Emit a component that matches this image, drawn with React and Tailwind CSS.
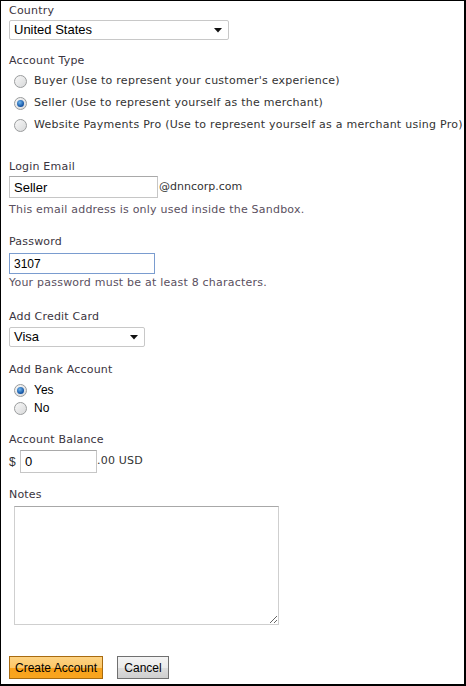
import React, { useState } from 'react';

const labelFont = { fontFamily: '"DejaVu Sans", Verdana, sans-serif' };
const inputFont = { fontFamily: '"Liberation Sans", Arial, sans-serif' };

function Radio({ checked, onClick }) {
  return (
    <span
      onClick={onClick}
      className="relative inline-flex items-center justify-center w-[13px] h-[13px] rounded-full border border-[#9a9c9d] bg-gradient-to-br from-[#f8f8f8] to-[#d8d9da] shrink-0"
    >
      {checked && (
        <span className="w-[7px] h-[7px] rounded-full bg-[radial-gradient(circle_at_40%_35%,#6fb6ee,#0f4fa0_70%)]" />
      )}
    </span>
  );
}

function Select({ value, width }) {
  return (
    <div
      className={`flex items-center justify-between h-[20px] ${width} border border-[#c8c8c8] rounded-[2px] bg-white pl-[4px] pr-[6px] text-[13px] text-black`}
      style={inputFont}
    >
      <span className="leading-[18px]">{value}</span>
      <svg width="8" height="5" viewBox="0 0 8 5"><path d="M0 0h8L4 4.5z" fill="#111" /></svg>
    </div>
  );
}

export default function App() {
  const [type, setType] = useState('seller');
  const [bank, setBank] = useState('yes');

  const label = 'block text-[11px] leading-[13px] text-[#3a3440] tracking-[0.2px]';
  const help = 'block text-[11px] leading-[13px] text-[#5a5060] tracking-[0.22px]';

  return (
    <div className="w-[466px] h-[686px] bg-white border-t border-l border-black border-r-2 border-b-2 pl-[8px] overflow-hidden" style={labelFont}>
      <span className={`${label} mt-[3px]`}>Country</span>
      <div className="mt-[3px]"><Select value="United States" width="w-[220px]" /></div>

      <span className={`${label} mt-[14px]`}>Account Type</span>
      <div className="mt-[3px] pl-[5px]">
        {[
          ['buyer', "Buyer (Use to represent your customer's experience)"],
          ['seller', 'Seller (Use to represent yourself as the merchant)'],
          ['pro', 'Website Payments Pro (Use to represent yourself as a merchant using Pro)'],
        ].map(([k, t]) => (
          <div key={k} className="flex items-center h-[22px] gap-[7px] cursor-default" onClick={() => setType(k)}>
            <Radio checked={type === k} />
            <span className="text-[11px] text-[#333] whitespace-nowrap tracking-[0.26px]">{t}</span>
          </div>
        ))}
      </div>

      <span className={`${label} mt-[24px]`}>Login Email</span>
      <div className="flex items-center mt-[3px]">
        <input
          defaultValue="Seller"
          className="w-[149px] h-[22px] border border-[#c6c6c6] border-t-[#a9a9a9] px-[4px] text-[13px] text-black outline-none"
          style={inputFont}
        />
        <span className="text-[11px] text-[#333] ml-[1px]">@dnncorp.com</span>
      </div>
      <span className={`${help} mt-[5px]`}>This email address is only used inside the Sandbox.</span>

      <span className={`${label} mt-[19px]`}>Password</span>
      <input
        defaultValue="3107"
        className="block mt-[5px] w-[146px] h-[21px] border border-[#7a9ccf] px-[4px] text-[12px] text-black outline-none"
        style={inputFont}
      />
      <span className={`${help} mt-[2px]`}>Your password must be at least 8 characters.</span>

      <span className={`${label} mt-[21px]`}>Add Credit Card</span>
      <div className="mt-[4px]"><Select value="Visa" width="w-[136px]" /></div>

      <span className={`${label} mt-[16px]`}>Add Bank Account</span>
      <div className="mt-[5px] pl-[5px]">
        {[['yes', 'Yes'], ['no', 'No']].map(([k, t]) => (
          <div key={k} className="flex items-center h-[18px] gap-[7px] cursor-default" onClick={() => setBank(k)}>
            <Radio checked={bank === k} />
            <span className="text-[12px] text-black" style={inputFont}>{t}</span>
          </div>
        ))}
      </div>

      <span className={`${label} mt-[16px]`}>Account Balance</span>
      <div className="flex items-center mt-[4px] text-[12px] text-[#333]" style={inputFont}>
        <span className="w-[11px]">$</span>
        <input
          defaultValue="0"
          className="w-[77px] h-[23px] border border-[#c6c6c6] border-t-[#a9a9a9] px-[4px] text-[13px] text-black outline-none"
          style={inputFont}
        />
        <span className="text-[11px] tracking-[0.2px]" style={labelFont}>.00 USD</span>
      </div>

      <span className={`${label} mt-[15px]`}>Notes</span>
      <textarea
        className="block mt-[5px] ml-[5px] w-[265px] h-[119px] border border-[#cfcfcf] border-t-[#a8a8a8] outline-none resize"
      />

      <div className="flex items-center gap-[14px] mt-[31px]" style={inputFont}>
        <button className="w-[94px] h-[23px] border border-[#a86b10] bg-[linear-gradient(#fdd383_0%,#fcc869_50%,#f9a21b_51%,#f8a51f_100%)] text-[12px] text-black">
          Create Account
        </button>
        <button className="w-[52px] h-[23px] border border-[#707070] bg-[linear-gradient(#f3f3f3_0%,#ebebeb_50%,#dddddd_51%,#cfcfcf_100%)] text-[12px] text-black">
          Cancel
        </button>
      </div>
    </div>
  );
}
